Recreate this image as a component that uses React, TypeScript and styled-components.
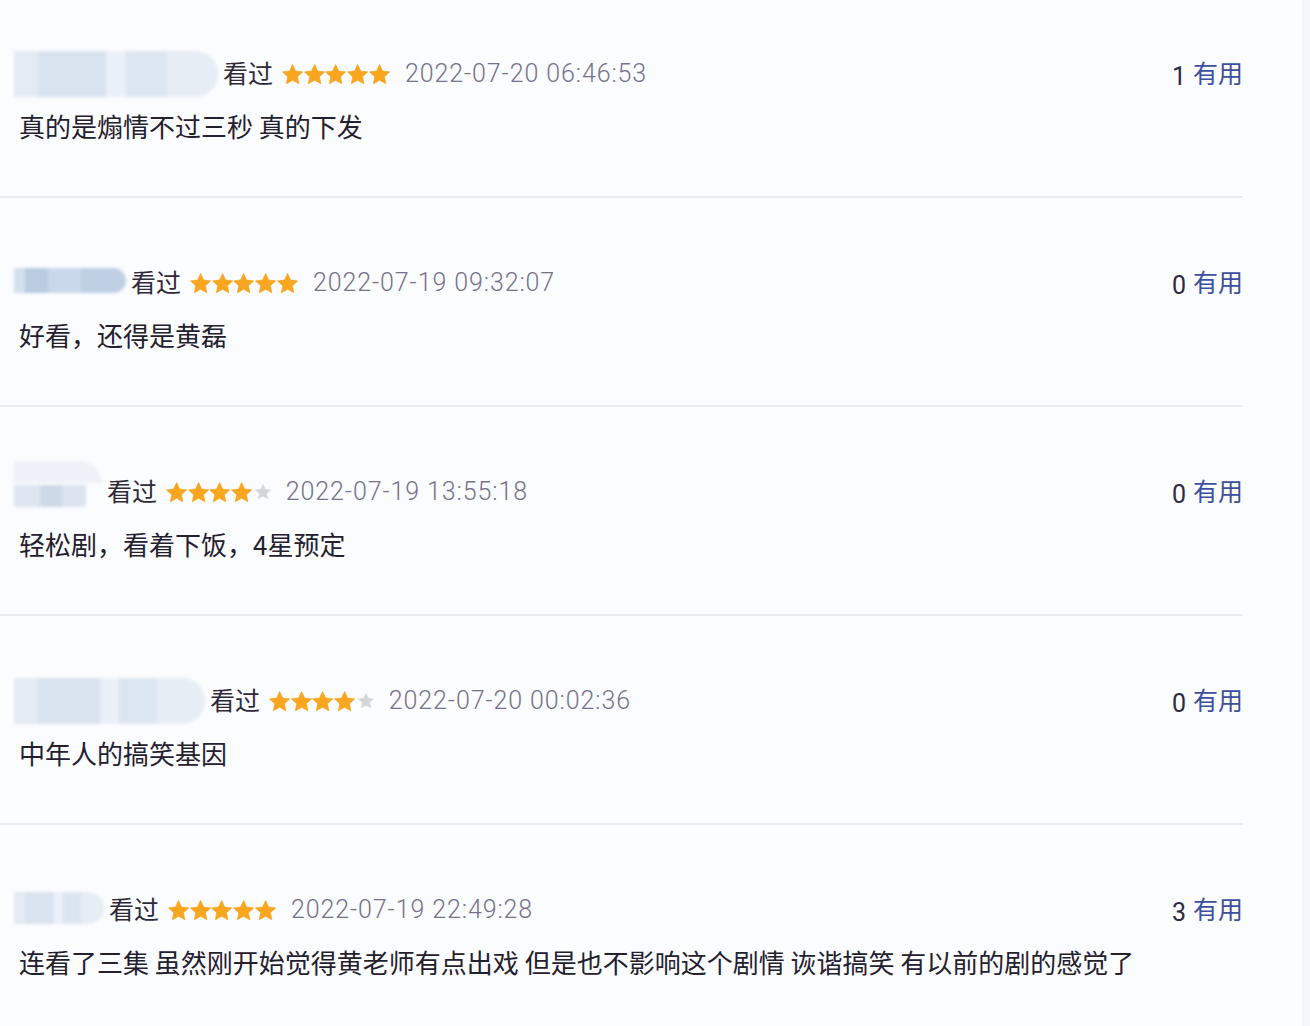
import React from 'react';
import styled, { createGlobalStyle } from 'styled-components';

type Comment = {
  nameWidth: number;
  nameHeight: number;
  nameShift?: number;
  tone: 'pale' | 'blue' | 'split';
  rating: number;
  time: string;
  votes: number;
  text: string;
};

const comments: Comment[] = [
  {
    nameWidth: 204,
    nameHeight: 46,
    tone: 'pale',
    rating: 5,
    time: '2022-07-20 06:46:53',
    votes: 1,
    text: '真的是煽情不过三秒 真的下发',
  },
  {
    nameWidth: 112,
    nameHeight: 25,
    nameShift: -3,
    tone: 'blue',
    rating: 5,
    time: '2022-07-19 09:32:07',
    votes: 0,
    text: '好看，还得是黄磊',
  },
  {
    nameWidth: 88,
    nameHeight: 46,
    nameShift: -8,
    tone: 'split',
    rating: 4,
    time: '2022-07-19 13:55:18',
    votes: 0,
    text: '轻松剧，看着下饭，4星预定',
  },
  {
    nameWidth: 191,
    nameHeight: 46,
    tone: 'pale',
    rating: 4,
    time: '2022-07-20 00:02:36',
    votes: 0,
    text: '中年人的搞笑基因',
  },
  {
    nameWidth: 90,
    nameHeight: 32,
    nameShift: -2,
    tone: 'pale',
    rating: 5,
    time: '2022-07-19 22:49:28',
    votes: 3,
    text: '连看了三集 虽然刚开始觉得黄老师有点出戏 但是也不影响这个剧情 诙谐搞笑 有以前的剧的感觉了',
  },
];

// chunky five-point star (inner radius ~0.48 of outer)
const STAR =
  'M10 0.5L12.82 6.62L19.51 7.41L14.57 11.98L15.88 18.59L10 15.3L4.12 18.59L5.43 11.98L0.49 7.41L7.18 6.62Z';

const Star = ({ on }: { on: boolean }) => (
  <StarIcon viewBox="0 0 20 19" $on={on}>
    <path d={STAR} />
  </StarIcon>
);

export default function App() {
  return (
    <>
      <GlobalStyle />
      <Page>
        <List>
          {comments.map((c, i) => (
            <Item key={i}>
              <Header>
                <Info>
                  <HiddenName
                    $w={c.nameWidth}
                    $h={c.nameHeight}
                    $tone={c.tone}
                    style={{ transform: `translateY(${c.nameShift ?? 0}px)` }}
                  />
                  <Watched>看过</Watched>
                  <Stars>
                    {[0, 1, 2, 3, 4].map((s) => (
                      <Star key={s} on={s < c.rating} />
                    ))}
                  </Stars>
                  <Time>{c.time}</Time>
                </Info>
                <Votes>
                  <Count>{c.votes}</Count>
                  <Useful>有用</Useful>
                </Votes>
              </Header>
              <Content>{c.text}</Content>
            </Item>
          ))}
        </List>
      </Page>
    </>
  );
}

const GlobalStyle = createGlobalStyle`
  html, body {
    margin: 0;
    padding: 0;
    background: #f4f6f9;
  }
  body {
    font-family: "Noto Sans CJK SC", "Noto Sans", sans-serif;
  }
`;

const Page = styled.div`
  width: 1302px;
  min-height: 1026px;
  background: #fbfcfe;
  overflow: hidden;
`;

const List = styled.div`
  width: 1243px;
`;

const Item = styled.div`
  padding: 65px 0 50px 0;
  border-bottom: 2px solid #e9edf2;

  &:first-child {
    padding-top: 54px;
  }
`;

const Header = styled.div`
  display: flex;
  align-items: center;
  justify-content: space-between;
  height: 40px;
`;

const Info = styled.div`
  display: flex;
  align-items: center;
  height: 40px;
`;

const HiddenName = styled.div<{ $w: number; $h: number; $tone: string }>`
  flex: none;
  width: ${(p) => p.$w}px;
  height: ${(p) => p.$h}px;
  margin-left: 14px;
  margin-right: 5px;
  border-radius: 0 ${(p) => p.$h / 2}px ${(p) => p.$h / 2}px 0;
  filter: blur(1.5px);
  background: ${(p) =>
    p.$tone === 'blue'
      ? 'linear-gradient(90deg, #d3e0ee 0% 10%, #b9cce2 10% 30%, #c9d8ea 30% 60%, #bfd0e5 60% 100%)'
      : p.$tone === 'split'
      ? 'linear-gradient(180deg, #eef2f8 0% 48%, #fbfcfe 48% 52%, transparent 52%), linear-gradient(90deg, #dde6f0 0% 30%, #cdd9e7 30% 55%, #dbe4ef 55% 82%, #fbfcfe 82%)'
      : 'linear-gradient(90deg, #e4ebf4 0% 12%, #d9e3ef 12% 45%, #eaf0f7 45% 55%, #dce6f1 55% 75%, #e6edf5 75% 100%)'};
`;

const Watched = styled.span`
  font-size: 25px;
  line-height: 40px;
  color: #2f2a3a;
  position: relative;
  top: -2px;
`;

const Stars = styled.span`
  display: flex;
  align-items: center;
  gap: 0.5px;
  margin: 0 15px 0 9px;
`;

const StarIcon = styled.svg<{ $on: boolean }>`
  flex: none;
  width: ${(p) => (p.$on ? 21.2 : 16)}px;
  height: ${(p) => (p.$on ? 20.2 : 15.2)}px;
  margin-left: ${(p) => (p.$on ? 0 : 2)}px;
  overflow: visible;
  fill: ${(p) => (p.$on ? '#f8a51f' : '#d4d6db')};
  stroke: ${(p) => (p.$on ? '#f8a51f' : '#d4d6db')};
  stroke-width: 0.7;
  stroke-linejoin: round;
`;

const Time = styled.span`
  font-family: Roboto, "Liberation Sans", sans-serif;
  font-weight: 300;
  font-size: 25px;
  line-height: 40px;
  color: #77728a;
  letter-spacing: 0.9px;
`;

const Votes = styled.div`
  display: flex;
  align-items: baseline;
  gap: 7px;
  font-size: 25px;
  line-height: 40px;
`;

const Count = styled.span`
  font-family: Roboto, "Liberation Sans", sans-serif;
  color: #2d2b3c;
  position: relative;
  top: 1px;
`;

const Useful = styled.span`
  color: #3d4f9f;
  position: relative;
  top: -1px;
`;

const Content = styled.div`
  margin-top: 12px;
  padding-left: 19px;
  font-size: 26px;
  line-height: 40px;
  color: #24202e;
  white-space: nowrap;
`;
